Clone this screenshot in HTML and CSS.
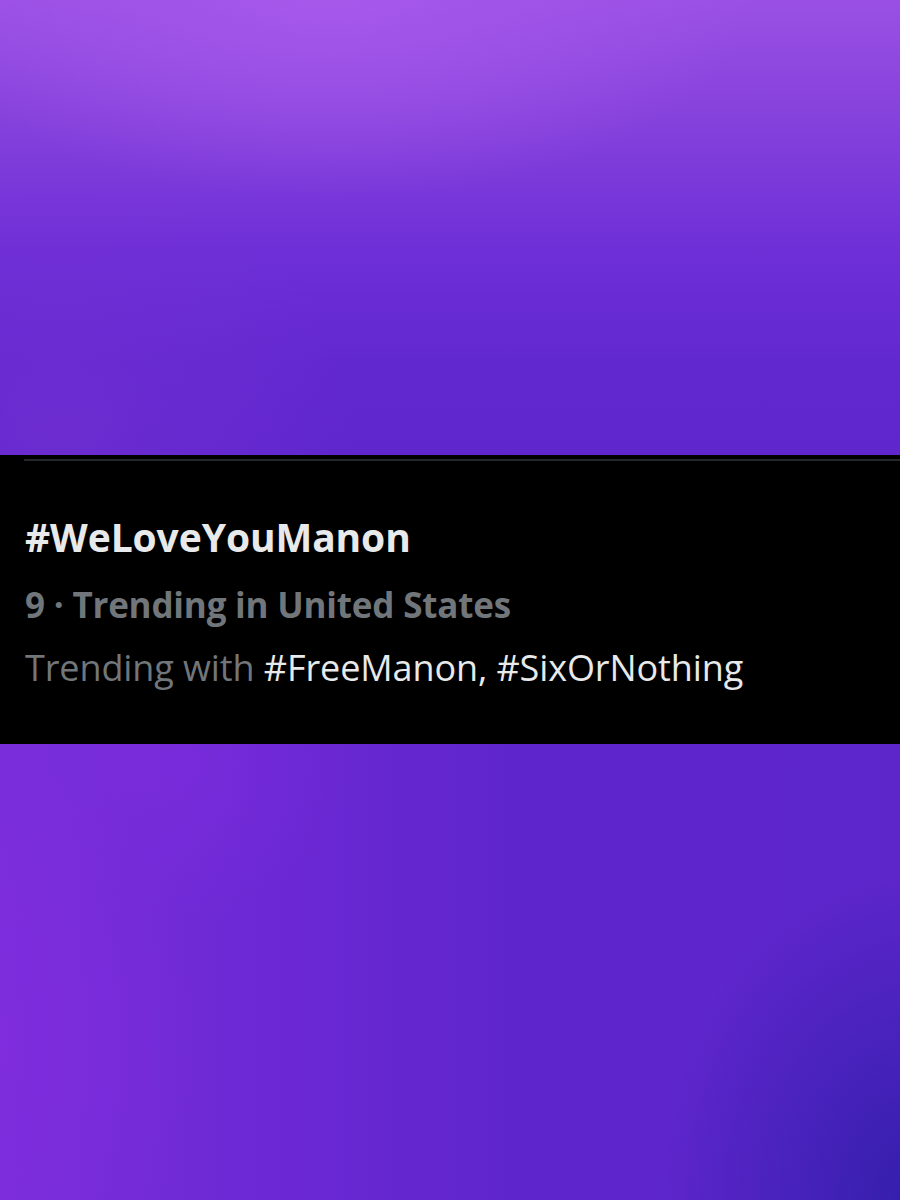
FILE: index.html
```html
<!DOCTYPE html>
<html lang="en">
<head>
<meta charset="utf-8">
<title>Trending</title>
<link rel="stylesheet" href="styles.css">
</head>
<body>
<div class="page">
  <div class="bg bg-top"></div>
  <section class="trend">
    <div class="divider"></div>
    <div class="title">#WeLoveYouManon</div>
    <div class="meta">9 · Trending in United States</div>
    <div class="with">Trending with <span class="tag">#FreeManon, #SixOrNothing</span></div>
  </section>
  <div class="bg bg-bottom"></div>
</div>
</body>
</html>
```

FILE: styles.css
```css
html, body {
  margin: 0;
  padding: 0;
  background: #6128d0;
}
.page {
  width: 900px;
  height: 1200px;
  display: flex;
  flex-direction: column;
  overflow: hidden;
  font-family: "Open Sans", "Noto Sans", sans-serif;
}
.bg-top {
  height: 455px;
  flex: none;
  background:
    radial-gradient(ellipse 420px 200px at 330px 0px, rgba(168, 90, 236, 0.85), rgba(168, 90, 236, 0) 100%),
    radial-gradient(ellipse 300px 260px at 60px 430px, rgba(120, 50, 210, 0.5), rgba(120, 50, 210, 0) 100%),
    linear-gradient(180deg, #9a50e4 0%, #8642dc 25%, #6e2fd7 55%, #6228d0 80%, #5f26ce 100%);
}
.trend {
  flex: none;
  background: #000;
  padding: 4px 0 54px 0;
}
.divider {
  height: 2px;
  margin-left: 24px;
  background: #24272b;
}
.title {
  margin: 54px 0 0 25px;
  font-size: 39px;
  line-height: 44px;
  font-weight: 700;
  color: #e7e9ea;
  letter-spacing: -0.1px;
}
.meta {
  margin: 24px 0 0 25px;
  font-size: 35px;
  line-height: 44px;
  font-weight: 700;
  color: #71767b;
  letter-spacing: -0.2px;
}
.with {
  margin: 19px 0 0 25px;
  font-size: 36px;
  line-height: 44px;
  font-weight: 400;
  color: #71767b;
  letter-spacing: -0.1px;
}
.tag {
  color: #e7e9ea;
}
.bg-bottom {
  flex: 1;
  background:
    radial-gradient(ellipse 260px 340px at 920px 460px, rgba(48, 30, 170, 0.95), rgba(48, 30, 170, 0) 100%),
    radial-gradient(ellipse 200px 300px at 0px 300px, rgba(128, 44, 222, 0.8), rgba(128, 44, 222, 0) 100%),
    radial-gradient(ellipse 180px 160px at 170px 20px, rgba(124, 44, 220, 0.7), rgba(124, 44, 220, 0) 100%),
    linear-gradient(90deg, #7a2edb 0%, #6b28d4 30%, #5e25cc 60%, #5d26cb 100%);
}
```
